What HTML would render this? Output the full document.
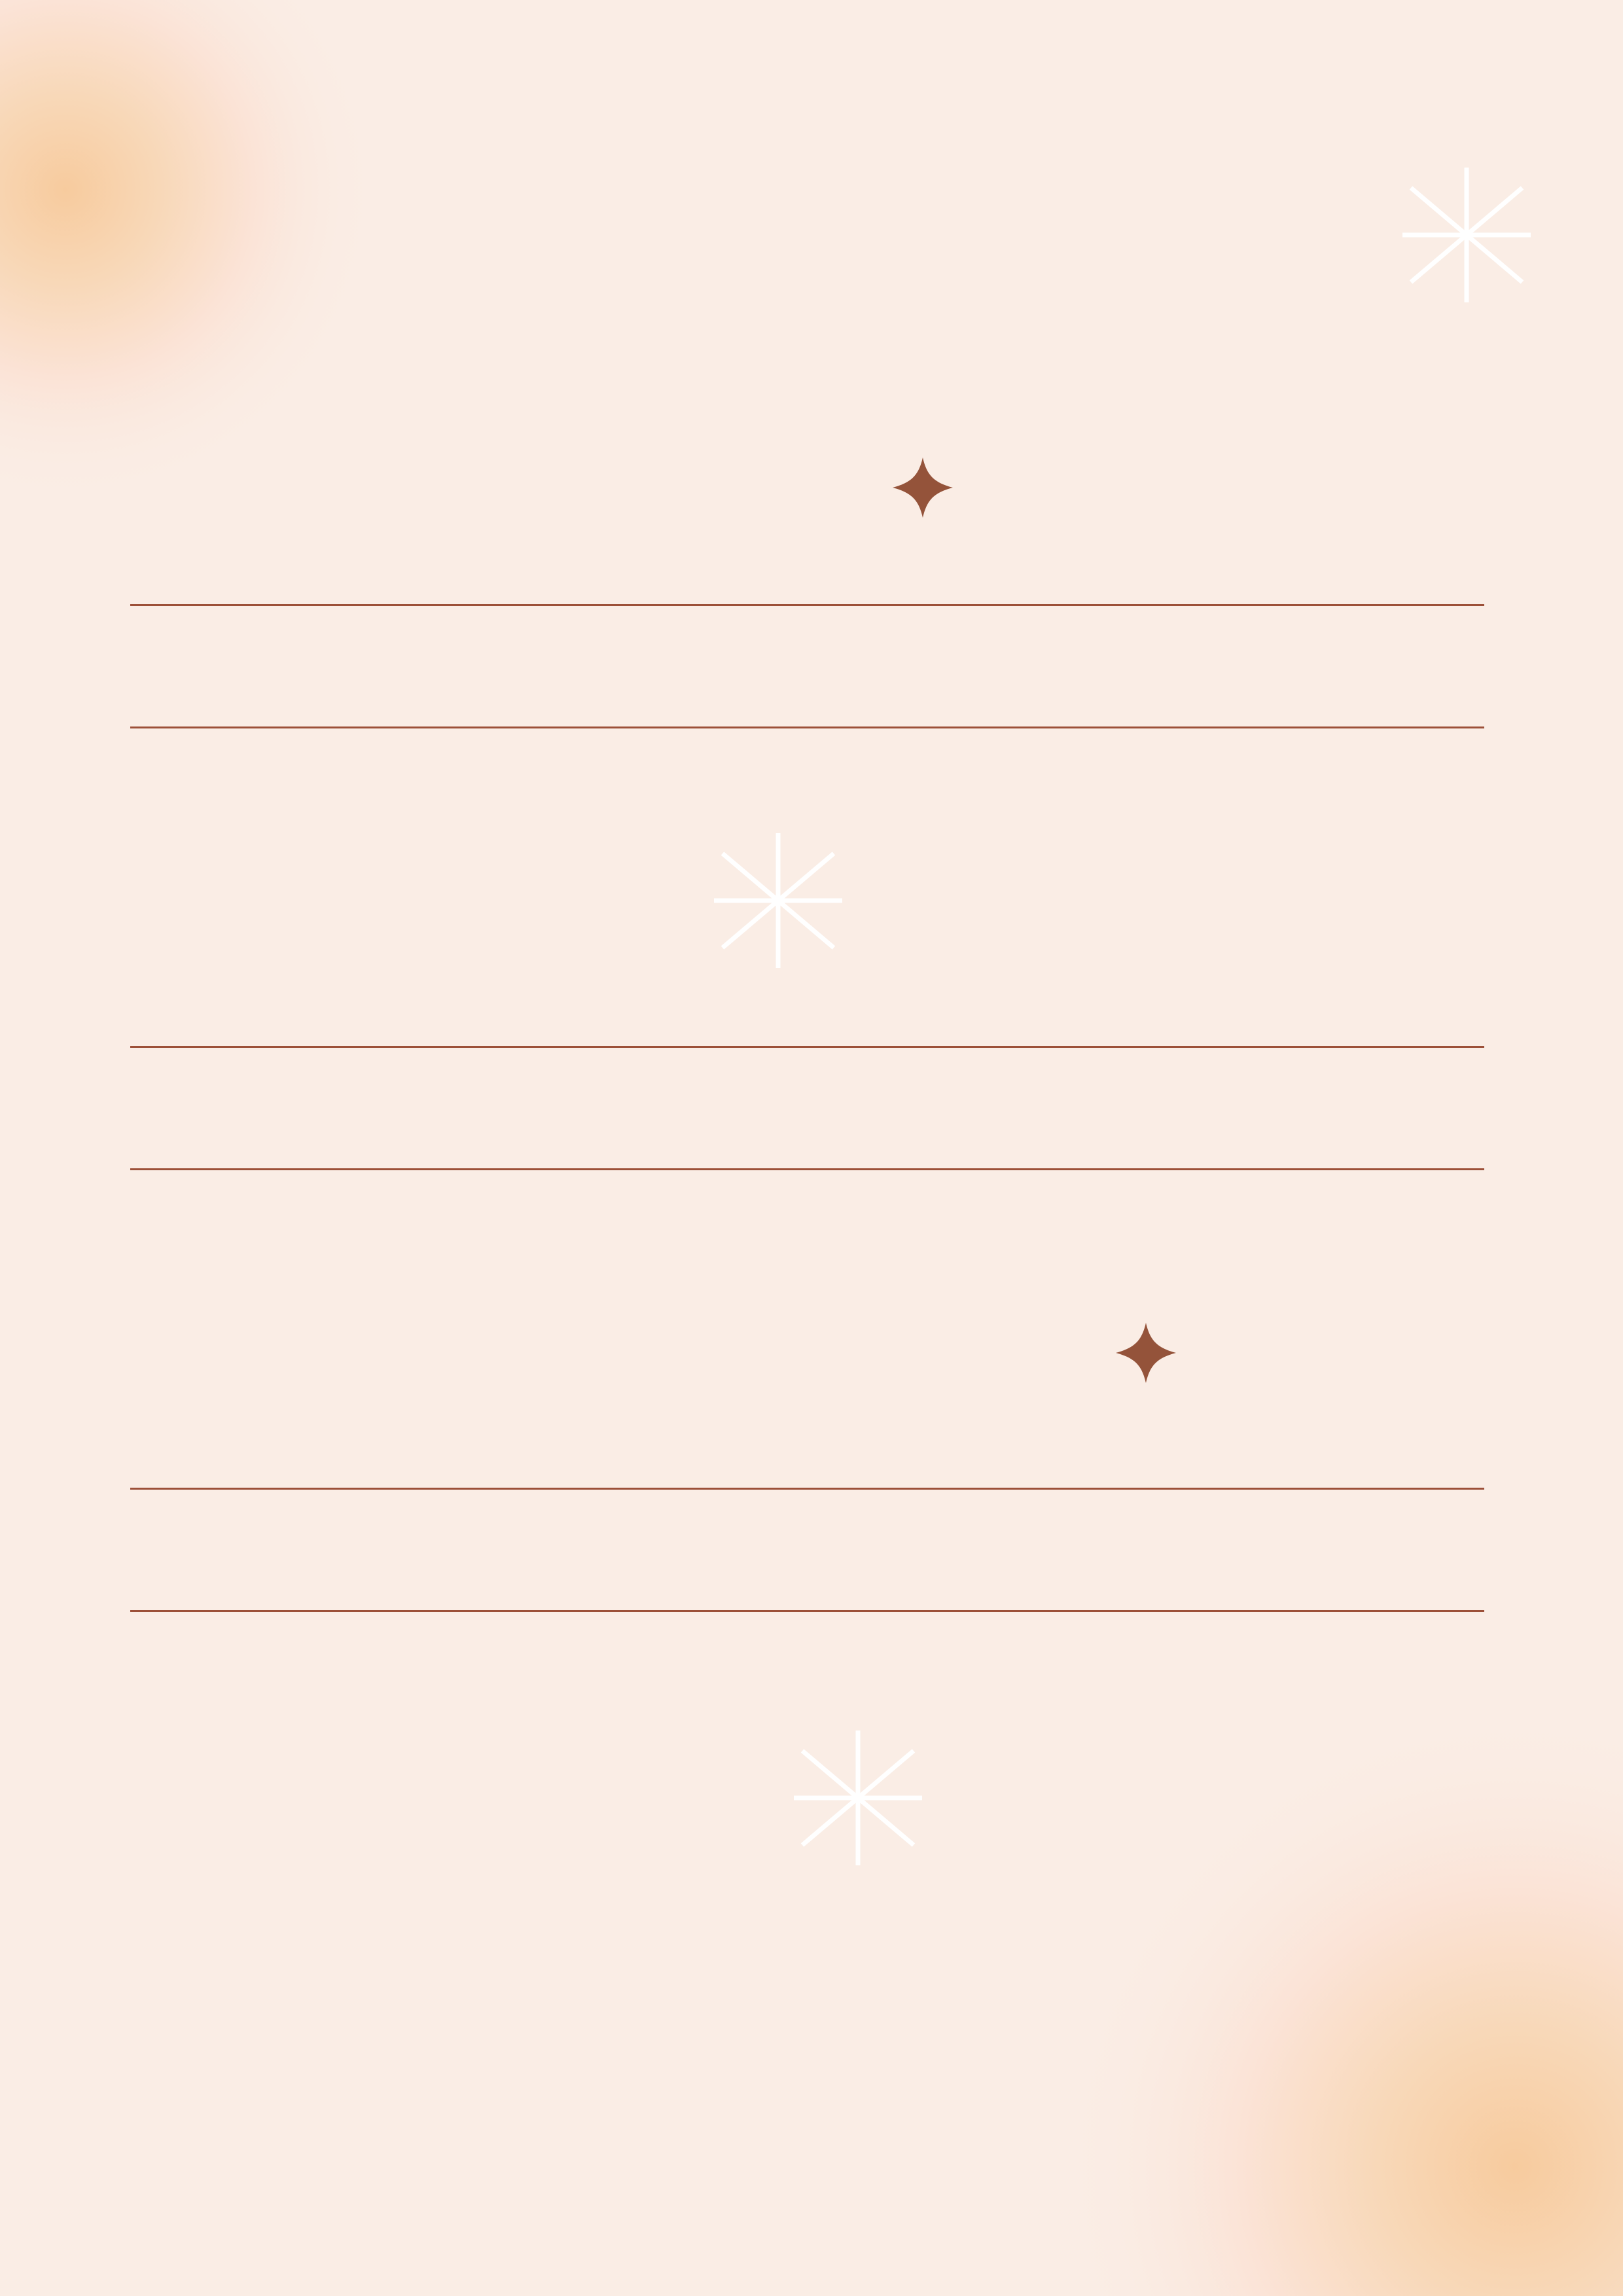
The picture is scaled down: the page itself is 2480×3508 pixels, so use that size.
<!DOCTYPE html>
<html><head><meta charset="utf-8">
<style>
html,body{margin:0;padding:0;}
body{width:2480px;height:3508px;overflow:hidden;background:#faede5;}
svg{display:block;}
</style></head>
<body>
<svg width="2480" height="3508" viewBox="0 0 2480 3508" xmlns="http://www.w3.org/2000/svg">
<defs>
<radialGradient id="g1" cx="100" cy="290" r="480" gradientUnits="userSpaceOnUse">
<stop offset="0" stop-color="#f7cb9e"/>
<stop offset="0.3" stop-color="#f8d8b8"/>
<stop offset="0.6" stop-color="#fbe3d6"/>
<stop offset="1" stop-color="#faede5" stop-opacity="0"/>
</radialGradient>
<radialGradient id="g2" cx="2315" cy="3310" r="700" gradientUnits="userSpaceOnUse">
<stop offset="0" stop-color="#f7cb9e"/>
<stop offset="0.3" stop-color="#f8d8b8"/>
<stop offset="0.6" stop-color="#fbe3d6"/>
<stop offset="1" stop-color="#faede5" stop-opacity="0"/>
</radialGradient>
<g id="ast" stroke="#ffffff" stroke-width="7" fill="none">
<line x1="0" y1="-103" x2="0" y2="103"/>
<line x1="-98" y1="0" x2="98" y2="0"/>
<line x1="-85" y1="-72" x2="85" y2="72"/>
<line x1="85" y1="-72" x2="-85" y2="72"/>
</g>
<path id="sp" d="M0,-46 C6,-20 16,-8 46,0 C16,8 6,20 0,46 C-6,20 -16,8 -46,0 C-16,-8 -6,-20 0,-46 Z" fill="#94533a"/>
</defs>
<rect width="2480" height="3508" fill="#faede5"/>
<rect width="2480" height="3508" fill="url(#g1)"/>
<rect width="2480" height="3508" fill="url(#g2)"/>
<g fill="#9c5038">
<rect x="199" y="923" width="2069" height="3"/>
<rect x="199" y="1110" width="2069" height="3"/>
<rect x="199" y="1598" width="2069" height="3"/>
<rect x="199" y="1785" width="2069" height="3"/>
<rect x="199" y="2273" width="2069" height="3"/>
<rect x="199" y="2460" width="2069" height="3"/>
</g>
<use href="#ast" x="2241" y="359"/>
<use href="#ast" x="1189" y="1376"/>
<use href="#ast" x="1311" y="2747"/>
<use href="#sp" x="1410" y="745"/>
<use href="#sp" x="1751" y="2067"/>
</svg>
</body></html>
